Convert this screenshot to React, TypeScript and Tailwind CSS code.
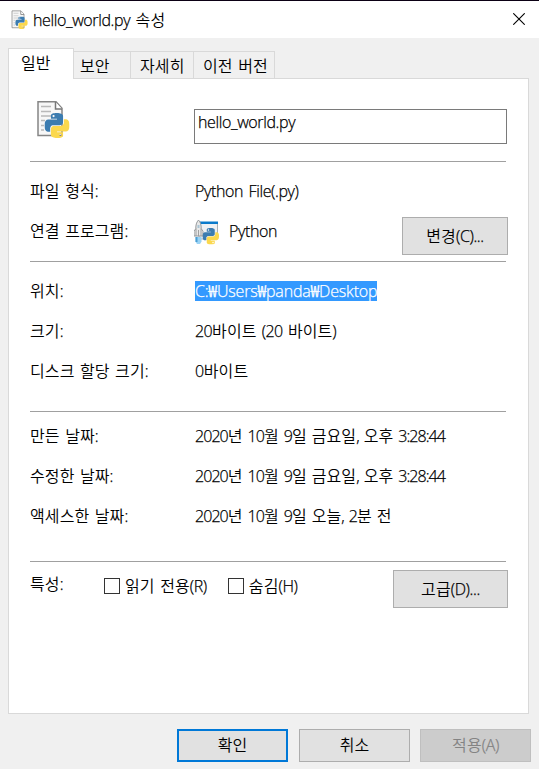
import React from "react";

const BLUE =
  "M14.25.18l.9.2.73.26.59.3.45.32.34.34.25.34.16.33.1.3.04.26.02.2-.01.13V8.5l-.05.63-.13.55-.21.46-.26.38-.3.31-.33.25-.35.19-.35.14-.33.1-.3.07-.26.04-.21.02H8.77l-.69.05-.59.14-.5.22-.41.27-.33.32-.27.35-.2.36-.15.37-.1.35-.07.32-.04.27-.02.21v3.06H3.17l-.21-.03-.28-.07-.32-.12-.35-.18-.36-.26-.36-.36-.35-.46-.32-.59-.28-.73-.21-.88-.14-1.05-.05-1.23.06-1.22.16-1.04.24-.87.32-.71.36-.57.4-.44.42-.33.42-.24.4-.16.36-.1.32-.05.24-.01h.16l.06.01h8.16v-.83H6.18l-.01-2.75-.02-.37.05-.34.11-.31.17-.28.25-.26.31-.23.38-.2.44-.18.51-.15.58-.12.64-.1.71-.06.77-.04.84-.02 1.27.05zm-6.3 1.98l-.23.33-.08.41.08.41.23.34.33.22.41.09.41-.09.33-.22.23-.34.08-.41-.08-.41-.23-.33-.33-.22-.41-.09-.41.09z";

function Snakes({ x, y, size }: { x: number; y: number; size: number }) {
  return (
    <svg x={x} y={y} width={size} height={size} viewBox="0 0 24 24">
      <path d={BLUE} fill="#3c7cb0" />
      <path d={BLUE} fill="#fbd84e" transform="rotate(180 12 12)" />
    </svg>
  );
}

function PyFileIcon({ className }: { className: string }) {
  return (
    <svg className={className} viewBox="0 0 34 38">
      <path d="M2 1.700h18l6 6.500V35.500H2z" fill="#f7f7f7" stroke="#858585" strokeWidth="1.5" />
      <path d="M19.500 2v7H26" fill="#fff" stroke="#777" strokeWidth="1.5" />
      <path d="M5 6.500h10M5 11.500h10M5 16h10M5 20.500h4M5 25.500h3M5 30h3" stroke="#b9b9b9" strokeWidth="1.3" />
      <Snakes x={8.5} y={13} size={25} />
    </svg>
  );
}

function LauncherIcon() {
  return (
    <svg className="-ml-px -mr-px mt-[3px] h-[26px] w-[26px] shrink-0" viewBox="0 0 26 26">
      <path d="M5 2.500h18.500V19H5z" fill="#eef1f4" stroke="#a9b0b6" strokeWidth="1" />
      <path d="M6 1.500h18v2.500H6z" fill="#0a7acb" />
      <path d="M4.500 0C6.700 2.500 7.200 5 7.200 8.500L9 11.500V16H0v-4.500L1.800 8.500C1.800 5 2.300 2.500 4.500 0z" fill="#e8e8e8" stroke="#95999c" strokeWidth="1" />
      <path d="M3.500 5h2v3h-2z" fill="#a9c4d4" />
      <path d="M4.500 10v6M2 8.500V16M7 8.500V16" stroke="#999" strokeWidth=".9" />
      <path d="M1.500 17h6v4.500L6 24H3l-1.500-2.500z" fill="#9bd3f5" />
      <path d="M1.500 17h2v5h-2z" fill="#4a9fd4" />
      <Snakes x={8.500} y={8} size={16.500} />
    </svg>
  );
}

/* Latin runs are tighter than the Hangul around them, with a thin stroke to even out the weight. */
function T({ children, latin = "tracking-[-0.38px]" }: { children: string; latin?: string }) {
  const runs = children.match(/[가-힣]+|[^가-힣]+/g) ?? [];
  return (
    <span className="font-[350] whitespace-pre">
      {runs.map((run, i) => (
        <span
          key={i}
          className={
            /[가-힣]/.test(run) ? "tracking-[0.1px]" : "[word-spacing:1.7px] [-webkit-text-stroke:0.25px_currentColor] " + latin
          }
        >
          {run}
        </span>
      ))}
    </span>
  );
}

function Row({ label, children }: { label: string; children: React.ReactNode }) {
  return (
    <div className="flex h-10 items-center">
      <div className="w-[165px] shrink-0">
        <T>{label}</T>
      </div>
      {children}
    </div>
  );
}

function Divider() {
  return <div className="h-px w-[476px] shrink-0 bg-[#a0a0a0]" />;
}

function Check({ label }: { label: string }) {
  return (
    <label className="flex items-center gap-[5px]">
      <span className="h-4 w-4 border border-[#333] bg-white" />
      <T>{label}</T>
    </label>
  );
}

function Tab({ label, className }: { label: string; className: string }) {
  return (
    <div className={"h-[27px] border-t border-r border-[#d9d9d9] bg-[#f0f0f0] pt-[2px] " + className}>
      <T>{label}</T>
    </div>
  );
}

const button = "flex shrink-0 items-center justify-center border ";

export default function App() {
  return (
    <div className="flex h-[769px] w-[539px] flex-col overflow-hidden bg-[#f0f0f0] font-['Open_Sans','Noto_Sans_CJK_KR',sans-serif] text-[16px] leading-6 text-black">
      <header className="flex h-[38px] shrink-0 items-center border-t border-[#0b0014] bg-white pr-[14px] pl-[11px]">
        <PyFileIcon className="h-[19px] w-[17px]" />
        <div className="ml-[5px]">
          <T>hello_world.py 속성</T>
        </div>
        <svg className="mb-px ml-auto h-3 w-3" viewBox="0 0 12 12">
          <path d="M.3.3l11.400 11.400M11.700.3L.3 11.700" stroke="#000" strokeWidth="1.1" />
        </svg>
      </header>

      <nav className="relative z-10 mt-[10px] -mb-px ml-2 flex h-[31px] shrink-0 items-end pb-px">
        <div className="-mb-px h-[31px] w-[66px] border-x border-t border-[#d9d9d9] bg-white pt-[2px] pl-3">
          <T>일반</T>
        </div>
        <Tab label="보안" className="w-[57px] pl-[6px]" />
        <Tab label="자세히" className="w-[63px] pl-[9px]" />
        <Tab label="이전 버전" className="w-[81px] pl-[9px]" />
      </nav>

      <main className="mx-2 mr-[10px] flex h-[636px] shrink-0 flex-col border border-[#d9d9d9] bg-white pl-[21px]">
        <div className="flex h-[82px] shrink-0">
          <PyFileIcon className="mt-[21px] ml-[6px] h-[38px] w-[34px]" />
          <div className="mt-[30px] ml-[124px] h-[35px] w-[313px] border border-[#7a7a7a] pl-[3px]">
            <T>hello_world.py</T>
          </div>
        </div>
        <Divider />
        <div className="h-[99px] shrink-0 pt-[9px]">
          <Row label="파일 형식:">
            <T>Python File(.py)</T>
          </Row>
          <Row label="연결 프로그램:">
            <LauncherIcon />
            <div className="ml-[10px]">
              <T>Python</T>
            </div>
            <button className={button + "mt-[10px] mr-[20px] ml-auto h-[38px] w-[106px] border-[#adadad] bg-[#e1e1e1]"}>
              <T>변경(C)...</T>
            </button>
          </Row>
        </div>
        <Divider />
        <div className="h-[149px] shrink-0 pt-[9px]">
          <Row label="위치:">
            <div className="h-5 bg-[#3399ff] leading-5 text-white">
              <T latin="tracking-[-0.19px]">C:₩Users₩panda₩Desktop</T>
            </div>
          </Row>
          <Row label="크기:">
            <T latin="tracking-[-0.6px]">20바이트 (20 바이트)</T>
          </Row>
          <Row label="디스크 할당 크기:">
            <T>0바이트</T>
          </Row>
        </div>
        <Divider />
        <div className="h-[149px] shrink-0 pt-1">
          <Row label="만든 날짜:">
            <T latin="tracking-[-0.93px]">2020년 10월 9일 금요일, 오후 3:28:44</T>
          </Row>
          <Row label="수정한 날짜:">
            <T latin="tracking-[-0.93px]">2020년 10월 9일 금요일, 오후 3:28:44</T>
          </Row>
          <Row label="액세스한 날짜:">
            <T latin="tracking-[-0.93px]">2020년 10월 9일 오늘, 2분 전</T>
          </Row>
        </div>
        <Divider />
        <div className="flex h-[54px] shrink-0 items-center pr-[20px]">
          <div className="mb-[11px] w-[74px]">
            <T>특성:</T>
          </div>
          <div className="mb-[6px] flex gap-[21px]">
            <Check label="읽기 전용(R)" />
            <Check label="숨김(H)" />
          </div>
          <button className={button + "ml-auto h-[38px] w-[115px] border-[#adadad] bg-[#e1e1e1]"}>
            <T>고급(D)...</T>
          </button>
        </div>
      </main>

      <footer className="flex justify-end pt-[15px] pr-2">
        <button className={button + "mr-[11px] h-[33px] w-[111px] border-2 border-[#0078d7] bg-[#e1e1e1] pb-px"}>
          <T>확인</T>
        </button>
        <button className={button + "mr-[10px] h-[33px] w-[111px] border-[#adadad] bg-[#e1e1e1] pb-px"}>
          <T>취소</T>
        </button>
        <button className={button + "h-[33px] w-[111px] border-[#bfbfbf] bg-[#cccccc] pb-px text-[#838383]"}>
          <T>적용(A)</T>
        </button>
      </footer>
    </div>
  );
}
